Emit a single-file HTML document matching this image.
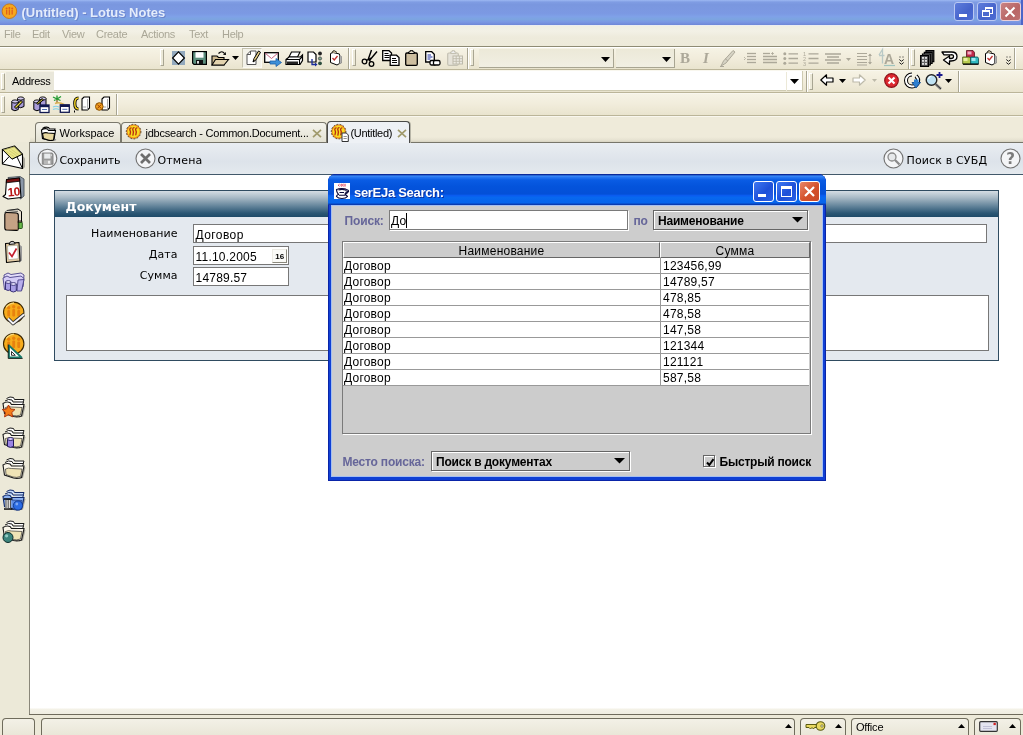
<!DOCTYPE html>
<html lang="ru">
<head>
<meta charset="utf-8">
<title>(Untitled) - Lotus Notes</title>
<style>
*{box-sizing:border-box;margin:0;padding:0}
html,body{width:1023px;height:735px;overflow:hidden;background:#ECE9D8}
body{position:relative;will-change:transform;font-family:"Liberation Sans","DejaVu Sans",sans-serif;font-size:11px;color:#000}
.abs{position:absolute}
.t{position:absolute;white-space:nowrap;line-height:1}
.tah{font-family:"Liberation Sans","DejaVu Sans Condensed",sans-serif;font-size:11px}
.ver{font-family:"DejaVu Sans","Liberation Sans",sans-serif;font-size:11px}
svg{position:absolute;overflow:visible}
/* ---------- XP title bar ---------- */
#title{left:0;top:0;width:1023px;height:25px;background:linear-gradient(#9DB8F2 0,#809DE3 8%,#7A97DF 18%,#7C99E3 55%,#7FA1E8 66%,#7CA5E0 77%,#7B97E4 88%,#6E87D7 100%)}
#title .cap{left:21.5px;top:5.500px;font-size:13px;font-weight:bold;color:#E4ECFB;text-shadow:1px 1px 0 #6C86CC}
.wb{position:absolute;top:2px;width:20px;height:19px;border:1px solid #B9C8F2;border-radius:3px;background:linear-gradient(135deg,#5E7DDC,#4563CB 60%,#4E6DD4)}
/* ---------- menu ---------- */
#menu{left:0;top:25px;width:1023px;height:21px;background:linear-gradient(#E9ECF6 0,#F1EFE3 1.500px,#F3F1E6 6px,#EEEBDC 12px,#EDEADA 21px)}
#menu .t{top:4px;color:#AAA797;font-size:11px;letter-spacing:-.3px}
/* ---------- toolbars ---------- */
.hline{position:absolute;left:0;width:1023px;height:1px}
.grip{position:absolute;width:4px;border-left:1px solid #fff;border-top:1px solid #fff;border-right:1px solid #A8A592;border-bottom:1px solid #A8A592;background:#ECE9D8}
.tbg{background:linear-gradient(#F6F3E5 0,#F1ECDB 50%,#E9E4CE 100%)}
/* ---------- tabs ---------- */
.tab{position:absolute;top:122px;height:20px;border:1px solid #7A786C;border-bottom:none;border-radius:4px 4px 0 0;background:linear-gradient(#F4F3EC,#E3E1D3)}
.tab .t{top:5px}
/* ---------- action bar ---------- */
#abar{left:29px;top:142px;width:994px;height:33px;background:linear-gradient(#E9EDF2,#DDE3EA 60%,#E4E9EE);border-top:1px solid #77756A;border-left:1px solid #8A877A;border-bottom:1px solid #42586A}
/* ---------- document ---------- */
#doc{left:30px;top:175px;width:993px;height:539px;background:linear-gradient(#fff 0,#fff 533px,#F4F2E8 534px,#EFEDE0 539px)}
#panel{left:54px;top:190px;width:945px;height:171px;border:1px solid #2F4B60;background:#E4E9EF}
#phead{left:0;top:0;width:943px;height:26px;background:linear-gradient(#D5DDE3 0,#A9BAC6 25%,#5F8198 60%,#2B5774 85%,#1E4A68 100%)}
.fld{position:absolute;background:#fff;border:1px solid #777}
.lbl{position:absolute;white-space:nowrap;line-height:1;font-family:"DejaVu Sans","Liberation Sans",sans-serif;font-size:11px;letter-spacing:.1px}
/* ---------- java dialog ---------- */
#dlg{left:328px;top:174px;width:498px;height:306.500px;border-radius:8px 8px 0 0;background:#1040D4;overflow:hidden;box-shadow:inset 0 0 0 1px #0A24A8}
#dlgt{left:0;top:0;width:498px;height:31px;background:linear-gradient(#0A2A9A 0,#0A2A9A 1px,#3C8CF8 1.800px,#2474F0 3.500px,#0A5CE4 6px,#0454DC 12px,#0450D8 20px,#0A5CF0 21.500px,#0868F0 23.500px,#0664EC 29px,#0A3CB0 30.200px,#0A3CB0 31px)}
#dlgc{left:4px;top:32px;width:490px;height:270px;background:#CDCDCD;box-shadow:0 0 0 1px #A4BFF2}
.jl{position:absolute;white-space:nowrap;line-height:1;font-size:12px;font-weight:bold;color:#666699}
.jb{position:absolute;white-space:nowrap;line-height:1;font-size:12px;font-weight:bold;color:#000}
.jp{position:absolute;white-space:nowrap;line-height:1;font-size:12px;color:#000;letter-spacing:.22px}
.combo{position:absolute;height:20px;background:#CCCCCC;border:1px solid #666;box-shadow:inset 1px 1px 0 #fff,1px 1px 0 #fff}
.row{position:absolute;left:0;width:466px;height:16px;background:#fff;border-bottom:1px solid #999}
.xb{position:absolute;top:7px;width:21px;height:21px;border:1px solid #fff;border-radius:3px}
/* ---------- status ---------- */
.sbox{position:absolute;height:18px;border:1px solid #6F6C5C;border-bottom:none;border-radius:4px 4px 0 0;background:linear-gradient(#F3F1E7,#E9E6D7)}
</style>
</head>
<body>

<!-- ======= TITLE BAR ======= -->
<div id="title" class="abs">
  <svg style="left:1px;top:3px" width="17" height="17" viewBox="0 0 17 17"><circle cx="8.400" cy="8.200" r="7.300" fill="#F6A81C" stroke="#C8781A" stroke-width="1"/><g fill="#E0601C"><circle cx="5.600" cy="5.600" r="1"/><circle cx="8.400" cy="5" r="1"/><circle cx="11.200" cy="5.600" r="1"/><rect x="5" y="7" width="1.300" height="4.500"/><rect x="7.700" y="6.400" width="1.400" height="5.500"/><rect x="10.500" y="7" width="1.300" height="4.500"/></g></svg>
  <span class="t cap">(Untitled) - Lotus Notes</span>
  <div class="abs" style="left:1021px;top:0;width:2px;height:25px;background:#4A66C8"></div>
  <div class="wb" style="left:954px"><div class="abs" style="left:4px;top:11px;width:8px;height:3px;background:#fff"></div></div>
  <div class="wb" style="left:977px"><div class="abs" style="left:7px;top:4px;width:8px;height:7px;border:1px solid #fff;border-top-width:2px"></div><div class="abs" style="left:4px;top:7px;width:8px;height:7px;border:1px solid #fff;border-top-width:2px;background:#4C69CE"></div></div>
  <div class="wb" style="left:1000px;width:21px;background:linear-gradient(135deg,#C98383,#B96666 60%,#BE7171);border-color:#E9CFD8"><svg style="left:3px;top:3px" width="12" height="12"><path d="M1.5 1.5 L10.5 10.5 M10.5 1.5 L1.5 10.5" stroke="#fff" stroke-width="2" fill="none"/></svg></div>
</div>

<!-- ======= MENU ======= -->
<div id="menu" class="abs">
  <span class="t" style="left:4px">File</span>
  <span class="t" style="left:32px">Edit</span>
  <span class="t" style="left:62px">View</span>
  <span class="t" style="left:96px">Create</span>
  <span class="t" style="left:141px">Actions</span>
  <span class="t" style="left:189px">Text</span>
  <span class="t" style="left:222px">Help</span>
</div>
<div class="hline" style="top:46px;background:#8E8B74"></div>
<div class="hline" style="top:47px;background:#fff"></div>

<!-- ======= TOOLBAR 1 ======= -->
<div id="tb1" class="abs tbg" style="left:0;top:48px;width:1023px;height:21px">
  <div class="grip" style="left:160px;top:1px;height:17px"></div>
  <svg style="left:172px;top:3px" width="13" height="14" viewBox="0 0 13 14"><rect width="13" height="14" fill="#93A9BD"/><path d="M6.500 .8L12.400 7 6.500 13.200 .6 7z" fill="#fff" stroke="#000" stroke-width="1.200"/></svg>
  <svg style="left:192px;top:3px" width="15" height="14" viewBox="0 0 15 14"><path d="M.6 .6h13.800v12.800H2L.6 12z" fill="#5C8F7D" stroke="#000" stroke-width="1.200"/><rect x="3.500" y="1.200" width="8" height="5.500" fill="#fff"/><rect x="4" y="9" width="7" height="4.400" fill="#111"/><rect x="5" y="10" width="2" height="2.600" fill="#ddd"/></svg>
  <svg style="left:211px;top:2px" width="18" height="16" viewBox="0 0 18 16"><path d="M1 6h5l1.500 1.500H13V15H1z" fill="#CDB98F" stroke="#000" stroke-width="1.100"/><path d="M1 15l3.500-5.500H17.500L13 15z" fill="#E3D3AE" stroke="#000" stroke-width="1.100"/><path d="M7.500 3.500q3.500-3.500 6 0" fill="none" stroke="#000" stroke-width="1.200"/><path d="M12 4.800l3 .2-.3-3z" fill="#000"/></svg>
  <svg style="left:232px;top:8px" width="7" height="4" viewBox="0 0 7 4"><path d="M0 0h7l-3.5 4z" fill="#000"/></svg>
  <div class="abs" style="left:242px;top:0;width:20px;height:20px;background:#F3F2E9;border:1px solid #C5C2AE;border-right-color:#FBFAF4;border-bottom-color:#FBFAF4"></div>
  <svg style="left:246px;top:2px" width="15" height="16" viewBox="0 0 15 16"><path d="M1 4.500L4.500 1H10v13.500H1z" fill="#fff" stroke="#555" stroke-width="1"/><path d="M1 4.500h3.500V1" fill="none" stroke="#555" stroke-width="1"/><path d="M7 12l1-3.500L12.500 1l2 1.300L10 9.800z" fill="#E9D28A" stroke="#000" stroke-width="1"/><path d="M7 12l.6-2 1.400 1z" fill="#000"/></svg>
  <svg style="left:264px;top:4px" width="18" height="14" viewBox="0 0 18 14"><rect x=".7" y=".7" width="13.600" height="9.600" fill="#fff" stroke="#000" stroke-width="1.300"/><path d="M1 1l6.500 5.500L14 1" fill="none" stroke="#C05070" stroke-width=".9"/><path d="M6 9h6V6.500l5.500 4-5.500 4V12H6z" fill="#3C8FD8" stroke="#1D5FA8" stroke-width=".8"/></svg>
  <svg style="left:285px;top:3px" width="18" height="15" viewBox="0 0 18 15"><path d="M4 6L6.500 1H15l-2.500 5z" fill="#fff" stroke="#000" stroke-width="1.100"/><path d="M1 8.500L4 6h11.500l2-2v5.500L15 13.500H1z" fill="#fff" stroke="#000" stroke-width="1.200"/><path d="M1 8.500h13.500V13.500M14.500 8.500l3-3" fill="none" stroke="#000" stroke-width="1.100"/><rect x="2" y="10.500" width="11" height="2.500" fill="#222"/></svg>
  <svg style="left:307px;top:3px" width="16" height="15" viewBox="0 0 16 15"><path d="M1 1h5.500L9 3.500V11H1z" fill="#fff" stroke="#000" stroke-width="1.200"/><path d="M5 8v5.500h3.500" fill="none" stroke="#1A2C9C" stroke-width="1.300"/><path d="M8 11.500l2.500 2-2.500 2z" fill="#1A2C9C"/><circle cx="13" cy="2.500" r="1.900" fill="#222"/><circle cx="13" cy="7.500" r="1.600" fill="#7FA890" stroke="#333" stroke-width=".7"/><circle cx="13" cy="12.300" r="1.900" fill="#2E4E3E"/></svg>
  <svg style="left:329px;top:2px" width="14" height="16" viewBox="0 0 14 16"><path d="M1.500 3.500L4 2.500l6.500 1.500v9.500L8 15 1.500 12.500z" fill="#fff" stroke="#000" stroke-width="1"/><path d="M3 2.800q1-2.800 2.500-2t2.500 1.700" fill="#E8D8B0" stroke="#000" stroke-width=".9"/><path d="M3.500 8l1.800 2L8.500 6" fill="none" stroke="#C03030" stroke-width="1.300"/><path d="M10.500 5l2 1.500v6.500l-2 1" fill="#B0B0B0" stroke="#777" stroke-width=".6"/></svg>
  <div class="abs" style="left:348px;top:0px;width:1px;height:21px;background:#A8A592"></div><div class="abs" style="left:349px;top:0px;width:1px;height:21px;background:#fff"></div>
  <div class="grip" style="left:352px;top:1px;height:17px"></div>
  <svg style="left:361px;top:2px" width="18" height="17" viewBox="0 0 18 17"><path d="M10.500 0L7 10M16 1.500L8 11" fill="none" stroke="#000" stroke-width="1.400"/><circle cx="3.500" cy="11.500" r="2.300" fill="none" stroke="#000" stroke-width="1.300"/><circle cx="10.500" cy="14" r="2.300" fill="none" stroke="#000" stroke-width="1.300"/><path d="M5.500 10.500L10 8M9.500 11.800L8 9" stroke="#000" stroke-width="1.200"/></svg>
  <svg style="left:382px;top:2px" width="18" height="16" viewBox="0 0 18 16"><path d="M.7 .7h6.300L9.500 3v7.500H.7z" fill="#fff" stroke="#000" stroke-width="1.300"/><path d="M2.500 3.500h4M2.500 5.500h5M2.500 7.500h5" stroke="#000" stroke-width="1"/><path d="M8.200 5.200h6.300L17 7.500V15.300H8.200z" fill="#fff" stroke="#000" stroke-width="1.300"/><path d="M10 8.500h4M10 10.500h5M10 12.500h5" stroke="#000" stroke-width="1"/></svg>
  <svg style="left:405px;top:2px" width="13" height="16" viewBox="0 0 13 16"><rect x=".7" y="3" width="11.600" height="12.300" rx="1.200" fill="#CDBE9F" stroke="#000" stroke-width="1.300"/><path d="M3.500 3.500V2h1.500V.7h3V2h1.500v1.500z" fill="#E9E1CC" stroke="#000" stroke-width="1"/></svg>
  <svg style="left:425px;top:3px" width="16" height="16" viewBox="0 0 16 16"><path d="M.7 .7h6L9.300 3.300V11H.7z" fill="#fff" stroke="#000" stroke-width="1.300"/><path d="M2.500 4h3.500M2.500 6h5M2.500 8h3" stroke="#1A2C9C" stroke-width="1"/><rect x="5" y="9.500" width="6" height="4.500" rx="1.500" fill="#fff" stroke="#000" stroke-width="1.300"/><rect x="8.500" y="9.500" width="6.500" height="4.500" rx="1.500" fill="#fff" stroke="#000" stroke-width="1.300"/></svg>
  <svg style="left:447px;top:2px" width="16" height="16" viewBox="0 0 16 16"><rect x=".7" y="3" width="10.600" height="12.300" rx="1.200" fill="#E6E3D9" stroke="#C4C1B2" stroke-width="1.200"/><path d="M3.500 3.500V2h1.500V.7h2.500V2H9v1.500z" fill="#EEE" stroke="#C4C1B2" stroke-width="1"/><rect x="6" y="6" width="9.500" height="8" fill="#EDEBE3" stroke="#BDBAAA" stroke-width="1"/><path d="M6 8.700h9.500M6 11.300h9.500M9.200 6v8M12.400 6v8" stroke="#BDBAAA" stroke-width=".9"/></svg>
  <div class="abs" style="left:467px;top:0px;width:1px;height:21px;background:#A8A592"></div><div class="abs" style="left:468px;top:0px;width:1px;height:21px;background:#fff"></div>
  <div class="grip" style="left:470px;top:1px;height:17px"></div>
  <div class="abs" style="left:479px;top:1px;width:135px;height:19px;border-bottom:1px solid #A8A592;border-right:1px solid #A8A592;background:linear-gradient(#ECE9D8,#F1EFE3)"></div>
  <svg style="left:601px;top:9px" width="9" height="5" viewBox="0 0 9 5"><path d="M0 0h9l-4.5 5z" fill="#000"/></svg>
  <div class="abs" style="left:616px;top:1px;width:59px;height:19px;border-bottom:1px solid #A8A592;border-right:1px solid #A8A592;background:linear-gradient(#ECE9D8,#F1EFE3)"></div>
  <svg style="left:662px;top:9px" width="9" height="5" viewBox="0 0 9 5"><path d="M0 0h9l-4.5 5z" fill="#000"/></svg>
  <span class="t" style="left:680px;top:3px;font-family:'Liberation Serif',serif;font-weight:bold;font-size:15px;color:#ACA899">B</span>
  <span class="t" style="left:703px;top:3px;font-family:'Liberation Serif',serif;font-style:italic;font-weight:bold;font-size:15px;color:#ACA899">I</span>
  <svg style="left:720px;top:1px" width="16" height="18" viewBox="0 0 16 18"><path d="M1 17l2.500-5L13 1.500l2 1.500L6 14z" fill="#D6D3C4" stroke="#ACA899" stroke-width="1"/><path d="M5 9.500l3 2.500" stroke="#ACA899" stroke-width="1"/><path d="M0 17.500h4" stroke="#ACA899" stroke-width="1"/></svg>
  <svg style="left:744px;top:4px" width="13" height="14" viewBox="0 0 13 14"><path d="M0 5l1.500 1.500L0 8" fill="none" stroke="#ACA899" stroke-width=".8"/><g transform="translate(3,0)"><path d="M0 1.5h9" stroke="#ACA899" stroke-width="1.300"/><path d="M0 4.5h9" stroke="#ACA899" stroke-width="1.300"/><path d="M0 7.5h9" stroke="#ACA899" stroke-width="1.300"/><path d="M0 10.5h9" stroke="#ACA899" stroke-width="1.300"/></g></svg>
  <svg style="left:763px;top:4px" width="15" height="14" viewBox="0 0 15 14"><path d="M0 1.500h7" stroke="#ACA899" stroke-width="1.300"/><path d="M9.500 0v3M8 1.500h3" stroke="#ACA899" stroke-width=".8"/><path d="M0 4.500h14M0 7.500h14M0 10.500h14" stroke="#ACA899" stroke-width="1.300"/></svg>
  <svg style="left:783px;top:4px" width="16" height="14" viewBox="0 0 16 14"><g fill="#ACA899"><circle cx="1.800" cy="1.800" r="1.500"/><circle cx="1.800" cy="6.500" r="1.500"/><circle cx="1.800" cy="11.200" r="1.500"/></g><path d="M5.500 1.800H15M5.500 6.500H15M5.500 11.200H15" stroke="#ACA899" stroke-width="1.300"/></svg>
  <svg style="left:803px;top:3px" width="16" height="16" viewBox="0 0 16 16"><text x="0" y="4.500" font-size="5.500" font-family="Liberation Sans,sans-serif" fill="#ACA899">1</text><text x="0" y="9.500" font-size="5.500" font-family="Liberation Sans,sans-serif" fill="#ACA899">2</text><text x="0" y="14.500" font-size="5.500" font-family="Liberation Sans,sans-serif" fill="#ACA899">3</text><path d="M5.500 2.800H15.500M5.500 7.500H15.500M5.500 12.200H15.500" stroke="#ACA899" stroke-width="1.300"/></svg>
  <svg style="left:825px;top:5px" width="16" height="12" viewBox="0 0 16 12"><path d="M0 1h16M2 4h12M0 7h16M2 10h12" stroke="#ACA899" stroke-width="1.300"/></svg>
  <svg style="left:846px;top:10px" width="5" height="3" viewBox="0 0 5 3"><path d="M0 0h5l-2.5 3z" fill="#ACA899"/></svg>
  <svg style="left:857px;top:3px" width="16" height="16" viewBox="0 0 16 16"><path d="M0 2.500h10M0 5.500h10M0 8.500h10M0 11.500h10M0 14h10" stroke="#ACA899" stroke-width="1.100"/><path d="M13 3v10" stroke="#ACA899" stroke-width="1"/><path d="M11 5l2-2.500L15 5zM11 11l2 2.500L15 11z" fill="#ACA899"/></svg>
  <svg style="left:877px;top:1px" width="19" height="18" viewBox="0 0 19 18"><path d="M2 6l3.500-5.500v8M2 6.500h5.500M5.500 8.500v6" fill="none" stroke="#B9C9C6" stroke-width="1.300"/><text x="7" y="15" font-size="14" font-weight="bold" font-family="Liberation Sans,sans-serif" fill="#ACA899">A</text><path d="M7 16.500h11" stroke="#9FC4BE" stroke-width="1.200"/></svg>
  <svg style="left:899px;top:8px" width="5" height="10" viewBox="0 0 5 10"><path d="M.5 1h1M3.500 1h1" stroke="#222" stroke-width="1"/><path d="M.3 3.500L2.500 5.300 4.700 3.500M.3 6.500L2.500 8.300 4.700 6.500" fill="none" stroke="#222" stroke-width="1"/></svg>
  <div class="abs" style="left:908px;top:0px;width:1px;height:21px;background:#A8A592"></div><div class="abs" style="left:909px;top:0px;width:1px;height:21px;background:#fff"></div>
  <div class="grip" style="left:911px;top:1px;height:17px"></div>
  <svg style="left:920px;top:2px" width="15" height="17" viewBox="0 0 15 17"><path d="M6 .7h7.800v11H6z" fill="#555" stroke="#000" stroke-width="1.200"/><path d="M4.300 2.300h7.800v11H4.300z" fill="#777" stroke="#000" stroke-width="1.200"/><path d="M2.500 4h7.800v11H2.500z" fill="#888" stroke="#000" stroke-width="1.200"/><path d="M.7 5.600h7.800v10.700H.7z" fill="#666" stroke="#000" stroke-width="1.300"/><g fill="#ddd"><rect x="2" y="7" width="2" height="1.800"/><rect x="5" y="7" width="2" height="1.800"/><rect x="2" y="10" width="2" height="1.800"/><rect x="5" y="10" width="2" height="1.800"/><rect x="2" y="13" width="2" height="1.800"/><rect x="5" y="13" width="2" height="1.800"/></g></svg>
  <svg style="left:941px;top:3px" width="17" height="15" viewBox="0 0 17 15"><path d="M1 1h9.500q5.500 0 5.500 4.500T10 10H8.500v3.500L2.500 9l6-4v2.500H10q2.500 0 2.500-2T10 3.800H3z" fill="#fff" stroke="#000" stroke-width="1.300" stroke-linejoin="round"/></svg>
  <svg style="left:962px;top:1px" width="17" height="16" viewBox="0 0 17 16"><path d="M4.500 1.500h6.500l1.500 2v5.500H4.500z" fill="#C0284A" stroke="#5A1020" stroke-width=".8"/><path d="M5.500 2.500h4v3h-4z" fill="#F0A8C0"/><path d="M.7 8h7l1 1.500V15H.7z" fill="#B8CC50" stroke="#3A4A10" stroke-width=".8"/><path d="M1.500 9h4v3h-4z" fill="#E8F0A0"/><path d="M8.700 8h7l.8 1.500V15H8.700z" fill="#30B8C0" stroke="#0A4A50" stroke-width=".8"/><path d="M9.500 9h4v3h-4z" fill="#A0E8F0"/><path d="M1 15.200h15.500" stroke="#000" stroke-width="1.200"/></svg>
  <svg style="left:984px;top:2px" width="15" height="16" viewBox="0 0 15 16"><path d="M1.500 3.500L4 2.500l6.500 1.500v9.500L8 15 1.500 12.500z" fill="#fff" stroke="#000" stroke-width="1"/><path d="M3 2.800q1-2.800 2.500-2t2.500 1.700" fill="#E8D8B0" stroke="#000" stroke-width=".9"/><path d="M3.500 8l1.800 2L8.500 6" fill="none" stroke="#C03030" stroke-width="1.300"/><path d="M10.500 5l2 1.500v6.500l-2 1" fill="#B0B0B0" stroke="#777" stroke-width=".6"/></svg>
  <svg style="left:1006px;top:8px" width="5" height="10" viewBox="0 0 5 10"><path d="M.5 1h1M3.500 1h1" stroke="#222" stroke-width="1"/><path d="M.3 3.500L2.500 5.300 4.700 3.500M.3 6.500L2.500 8.300 4.700 6.500" fill="none" stroke="#222" stroke-width="1"/></svg>
  <div class="abs" style="left:1014px;top:0px;width:1px;height:21px;background:#A8A592"></div><div class="abs" style="left:1015px;top:0px;width:1px;height:21px;background:#fff"></div>
</div>
<div class="hline" style="top:69px;background:#BBB599"></div>
<div class="hline" style="top:70px;background:#F9F7EE"></div>

<!-- ======= ADDRESS ROW ======= -->
<div id="addr" class="abs tbg" style="left:0;top:71px;width:1023px;height:21px">
  <div class="grip" style="left:1px;top:2px;height:17px"></div>
  <div class="abs" style="left:6px;top:1px;width:48px;height:20px;background:#E9E7DA"></div>
  <span class="t tah" style="left:12px;top:5px;letter-spacing:-.25px">Address</span>
  <div class="abs" style="left:54px;top:0;width:749px;height:20px;background:#fff;border-bottom:1px solid #CFCBB2;border-right:1px solid #CFCBB2"></div>
  <svg style="left:790px;top:8px" width="9" height="5" viewBox="0 0 9 5"><path d="M0 0h9l-4.5 5z" fill="#000"/></svg>
  <div class="abs" style="left:786px;top:1px;width:1px;height:19px;background:#ECE9D8"></div>
  <div class="abs" style="left:806px;top:0px;width:1px;height:21px;background:#A8A592"></div><div class="abs" style="left:807px;top:0px;width:1px;height:21px;background:#fff"></div>
  <div class="grip" style="left:809px;top:2px;height:17px"></div>
  <svg style="left:820px;top:3px" width="14" height="12" viewBox="0 0 14 12"><path d="M.8 6L6.500 .8V4H13v4H6.500v3.200z" fill="#fff" stroke="#000" stroke-width="1.200" stroke-linejoin="round"/></svg>
  <svg style="left:839px;top:8px" width="7" height="4" viewBox="0 0 7 4"><path d="M0 0h7l-3.5 4z" fill="#000"/></svg>
  <svg style="left:852px;top:3px" width="14" height="12" viewBox="0 0 14 12"><path d="M13.200 6L7.500 .8V4H1v4h6.500v3.200z" fill="#fff" stroke="#BDBAAA" stroke-width="1.200" stroke-linejoin="round"/></svg>
  <svg style="left:872px;top:8px" width="5" height="3" viewBox="0 0 5 3"><path d="M0 0h5l-2.5 3z" fill="#BDBAAA"/></svg>
  <svg style="left:884px;top:2px" width="15" height="15" viewBox="0 0 15 15"><circle cx="7.500" cy="7.500" r="6.800" fill="#DC2830" stroke="#8C1018" stroke-width="1.200"/><path d="M4.500 4.500l6 6M10.500 4.500l-6 6" stroke="#fff" stroke-width="2.200"/></svg>
  <svg style="left:903px;top:2px" width="18" height="16" viewBox="0 0 18 16"><path d="M9 1.500A6 6 0 1 0 9 13.500A6 6 0 0 0 13 3" fill="none" stroke="#000" stroke-width="4"/><path d="M9 1.500A6 6 0 1 0 9 13.500A6 6 0 0 0 13 3" fill="none" stroke="#fff" stroke-width="2"/><path d="M9 9.500h8.500L13 15z" fill="#2D7FD0" stroke="#144A8A" stroke-width=".9"/><path d="M11 6.500h4.500v3.500H11z" fill="#2D7FD0"/></svg>
  <svg style="left:925px;top:1px" width="18" height="17" viewBox="0 0 18 17"><circle cx="6.500" cy="8" r="5.300" fill="#BFE2F4" stroke="#222" stroke-width="1.400"/><path d="M3.500 7q.5-2.500 3-3" fill="none" stroke="#fff" stroke-width="1.200"/><path d="M10.500 12L16 17" stroke="#888" stroke-width="2.600"/><path d="M10.500 12L16 17" stroke="#333" stroke-width="1"/><path d="M14.500 0v6M11.500 3h6" stroke="#1A1A8C" stroke-width="1.800"/></svg>
  <svg style="left:945px;top:8px" width="7" height="4" viewBox="0 0 7 4"><path d="M0 0h7l-3.5 4z" fill="#000"/></svg>
  <div class="abs" style="left:958px;top:0px;width:1px;height:21px;background:#A8A592"></div><div class="abs" style="left:959px;top:0px;width:1px;height:21px;background:#fff"></div>
</div>
<div class="hline" style="top:92px;background:#BBB599"></div>
<div class="hline" style="top:93px;background:#F9F7EE"></div>

<!-- ======= TOOLBAR 3 ======= -->
<div id="tb3" class="abs tbg" style="left:0;top:94px;width:1023px;height:21px">
  <div class="grip" style="left:1px;top:2px;height:17px"></div>
  <svg style="left:11px;top:2px" width="16" height="17" viewBox="0 0 16 17"><path d="M6.5 2.5v8q3 2.500 6.500 0v-8" fill="#A99CD8" stroke="#000" stroke-width="1"/><ellipse cx="9.75" cy="2.5" rx="3.250" ry="1.600" fill="#D4CCF0" stroke="#000" stroke-width=".9"/><path d="M0.8 5.5v8q3 2.500 6.500 0v-8" fill="#A99CD8" stroke="#000" stroke-width="1"/><ellipse cx="4.05" cy="5.5" rx="3.250" ry="1.600" fill="#D4CCF0" stroke="#000" stroke-width=".9"/><path d="M4 12l7-7" stroke="#000" stroke-width="3"/><path d="M4.500 11.500l6-6" stroke="#E8D84A" stroke-width="1.200"/></svg>
  <svg style="left:33px;top:2px" width="17" height="17" viewBox="0 0 17 17"><path d="M6.5 2.5v8q3 2.500 6.500 0v-8" fill="#A99CD8" stroke="#000" stroke-width="1"/><ellipse cx="9.75" cy="2.5" rx="3.250" ry="1.600" fill="#D4CCF0" stroke="#000" stroke-width=".9"/><path d="M0.8 5.5v8q3 2.500 6.500 0v-8" fill="#A99CD8" stroke="#000" stroke-width="1"/><ellipse cx="4.05" cy="5.5" rx="3.250" ry="1.600" fill="#D4CCF0" stroke="#000" stroke-width=".9"/><path d="M4 8l6-5" stroke="#000" stroke-width="2.600"/><path d="M4.500 7.500l5-4" stroke="#E8D84A" stroke-width="1"/><rect x="7" y="9" width="9" height="7.500" fill="#fff" stroke="#101850" stroke-width="1.300"/><rect x="7" y="9" width="9" height="2.200" fill="#101850"/><path d="M9 13.5h5" stroke="#5070B0" stroke-width="1"/></svg>
  <svg style="left:52px;top:1px" width="18" height="18" viewBox="0 0 18 18"><path d="M5 8V4" stroke="#7A5A20" stroke-width="1.200"/><path d="M5 4L1 2M5 4L2 5.500M5 4l4-2.500M5 4l3.500 1.500M5 4V.5" stroke="#1E9A30" stroke-width="1.300"/><path d="M3 8.500q4-2 9 1" fill="none" stroke="#D8B050" stroke-width="1.600"/><path d="M1 12q3-1.500 6 0M1 14.500q3-1.500 6 0" fill="none" stroke="#80D0E8" stroke-width="1.200"/><rect x="8.3" y="9.8" width="9" height="7.500" fill="#fff" stroke="#101850" stroke-width="1.300"/><rect x="8.3" y="9.8" width="9" height="2.200" fill="#101850"/><path d="M10.3 14.3h5" stroke="#5070B0" stroke-width="1"/></svg>
  <svg style="left:74px;top:2px" width="17" height="17" viewBox="0 0 17 17"><path d="M4.500 2Q.8 2 .8 7.500T4.500 13" fill="none" stroke="#000" stroke-width="3.200"/><path d="M4.500 2Q.8 2 .8 7.500T4.500 13" fill="none" stroke="#F0D020" stroke-width="1.500"/><path d="M.5 14.500v2" stroke="#000" stroke-width="1"/><path d="M8 3.0l2-2h5.500v11l-2 2H8z" fill="#fff" stroke="#000" stroke-width="1.100"/><path d="M13.5 3.0v11" stroke="#999" stroke-width=".8"/><path d="M9.2 11.0h3" stroke="#888" stroke-width=".8"/></svg>
  <svg style="left:95px;top:2px" width="16" height="17" viewBox="0 0 16 17"><path d="M7 3.0l2-2h5.500v11l-2 2H7z" fill="#fff" stroke="#000" stroke-width="1.100"/><path d="M12.5 3.0v11" stroke="#999" stroke-width=".8"/><path d="M8.2 11.0h3" stroke="#888" stroke-width=".8"/><circle cx="4.300" cy="10.500" r="3.800" fill="#F0A020" stroke="#8A5000" stroke-width="1"/><path d="M2.300 8.500l4 4M6.300 8.500l-4 4" stroke="#A04000" stroke-width="1"/></svg>
  <div class="abs" style="left:116px;top:0px;width:1px;height:21px;background:#A8A592"></div><div class="abs" style="left:117px;top:0px;width:1px;height:21px;background:#fff"></div>
</div>
<div class="hline" style="top:115px;background:#BBB599"></div>
<div class="hline" style="top:116px;background:#F9F7EE"></div>

<!-- ======= TABS ======= -->
<div class="abs" style="left:0;top:117px;width:1023px;height:25px;background:#EFEBDA"></div><div class="abs" style="left:30px;top:137px;width:993px;height:5px;background:linear-gradient(#EFEBDA,#E6E2D1 60%,#D6D2C1)"></div>
<div id="tabs" class="abs" style="left:0;top:117px;width:1023px;height:26px;z-index:2">
  <div class="tab" style="left:35px;top:5px;width:86px"><svg style="left:4px;top:2px" width="18" height="17" viewBox="0 0 18 17"><path d="M2.500 3.500q3-2 6-1l1 1.500h5.500l-.5 2" fill="#fff" stroke="#000" stroke-width="1.100"/><path d="M1.500 5q3-2 6-1l1 1.500H15.500l-1.500 9q-3 1.500-6 0.500l-5.500-1.500z" fill="#fff" stroke="#000" stroke-width="1.100"/><path d="M2.500 8.500q3-1.500 5.500-.5l6.500.5-1 6.500q-3 1-5.500 0L3.500 13.500z" fill="#E8D8A0" stroke="#000" stroke-width="1.100"/><path d="M14 15.500l2-1" stroke="#888" stroke-width="1.200"/></svg><span class="t tah" style="left:23.500px;top:4.500px">Workspace</span></div>
  <div class="tab" style="left:121px;top:5px;width:206px"><svg style="left:3px;top:0px" width="18" height="18" viewBox="0 0 18 18"><circle cx="8.6" cy="8.6" r="6.600" fill="#F8DC20" stroke="#F08818" stroke-width="1.200"/><circle cx="8.6" cy="8.6" r="7.300" fill="none" stroke="#2A2000" stroke-width=".8" stroke-dasharray="1.800 1.400"/><g fill="none" stroke="#B82C10" stroke-width="1.300" stroke-linecap="round"><path d="M5.0 11.8q1.200-3-.2-5.200 0-1.600 1.300-1.800"/><path d="M7.8999999999999995 12.2q1.200-3.400-.2-5.800 0-1.600 1.300-1.800"/><path d="M10.8 11.8q1.200-3-.2-5.200 0-1.600 1.300-1.800"/></g></svg><span class="t tah" style="left:23.500px;top:4.500px;letter-spacing:-.22px">jdbcsearch - Common.Document...</span><svg style="left:190px;top:6px" width="10" height="9" viewBox="0 0 10 9"><path d="M1 .8l8 7.400M9 .8L1 8.200" stroke="#A09A6C" stroke-width="1.700" fill="none"/></svg></div>
  <div class="tab" style="left:327px;top:4px;width:83px;height:22px;background:#EEF1F5;border-color:#4A4A48;box-shadow:1px 0 0 #B8B6A8"><svg style="left:2px;top:1px" width="22" height="20" viewBox="0 0 22 20"><circle cx="8.6" cy="8.6" r="6.600" fill="#F8DC20" stroke="#F08818" stroke-width="1.200"/><circle cx="8.6" cy="8.6" r="7.300" fill="none" stroke="#2A2000" stroke-width=".8" stroke-dasharray="1.800 1.400"/><g fill="none" stroke="#B82C10" stroke-width="1.300" stroke-linecap="round"><path d="M5.0 11.8q1.200-3-.2-5.200 0-1.600 1.300-1.800"/><path d="M7.8999999999999995 12.2q1.200-3.400-.2-5.800 0-1.600 1.300-1.800"/><path d="M10.8 11.8q1.200-3-.2-5.200 0-1.600 1.300-1.800"/></g><path d="M12 10h4.300l2 2v6.500H12z" fill="#fff" stroke="#333" stroke-width="1"/><path d="M13.500 13.500h3.300M13.500 15.500h3.300" stroke="#777" stroke-width=".8"/></svg><span class="t tah" style="left:22.500px;top:6px;letter-spacing:-.3px">(Untitled)</span><svg style="left:69px;top:7px" width="10" height="9" viewBox="0 0 10 9"><path d="M1 .8l8 7.400M9 .8L1 8.200" stroke="#A09A6C" stroke-width="1.700" fill="none"/></svg></div>
</div>

<!-- ======= SIDEBAR ======= -->
<div id="side" class="abs" style="left:0;top:143px;width:29px;height:570px">
  <svg style="left:0;top:0" width="29" height="570" viewBox="0 143 29 570">
  <path d="M23 156l2 2.500v8.500l-2 2z" fill="#A8A59A"/><path d="M2.400 149.500L14.500 146l8 8.200V168.500L2.400 164z" fill="#fff" stroke="#000" stroke-width="1.100" stroke-linejoin="round"/><path d="M3.300 150L14.300 146.800l7.500 7.600L12 159z" fill="#E9E58A" stroke="#8C8A3A" stroke-width=".7"/><path d="M2.400 149.500L12 159.200l10.500-5M2.400 164l6.800-7.500M22.500 168.500l-5.500-11.600" fill="none" stroke="#000" stroke-width="1"/><path d="M6 151.500l8 5M9 150.500l7.500 5M11.500 149.500l7 5.200" stroke="#C9C560" stroke-width=".6"/>
  <path d="M8 177.500l12-1 4 2.500v17l-3.500 3z" fill="#8C98A8" stroke="#4A5058" stroke-width=".9"/><path d="M6.500 179.500L19.500 178l1.500 19.500-13 1.500-5 -2.500 2.500-2z" fill="#fff" stroke="#000" stroke-width="1.100" stroke-linejoin="round"/><path d="M6.500 179.500L19.500 178l.3 3.200L6.300 182.800z" fill="#7A1010" stroke="#000" stroke-width=".8"/><text x="7.500" y="196" font-size="12" font-weight="bold" font-family="Liberation Sans,sans-serif" fill="#B81414" transform="rotate(-5 13 190)" letter-spacing="-.8">10</text>
  <path d="M7 210.500l11-1.500 3.500 2.500v14l-3 3" fill="#E8E0D0" stroke="#000" stroke-width="1"/><path d="M5 213q0-2 2-2.300l11-1.200M8 212.500l10-1.200" fill="none" stroke="#555" stroke-width=".8"/><rect x="4.800" y="212.800" width="13.500" height="17.500" rx="2" fill="#C4A285" stroke="#000" stroke-width="1.100" stroke-linejoin="round" transform="skewY(3) translate(0,-.6)"/><path d="M18.300 221h3.500v2h-3.500z" fill="#C4A285" stroke="#000" stroke-width=".9"/><rect x="18.800" y="222.500" width="3.500" height="6" rx=".8" fill="#6CB84C" stroke="#1A4A10" stroke-width=".9"/><path d="M6.500 229.500h11" stroke="#8A6A50" stroke-width="1"/>
  <path d="M20 245l2 1.500v14l-3 2.500z" fill="#9A9A9A"/><path d="M5.500 243.500l13.500-1 1 18.500-13.500 1.500z" fill="#E4CDA6" stroke="#000" stroke-width="1.100" stroke-linejoin="round"/><path d="M7.500 246l10-.8.800 13.500-10 1z" fill="#fff" stroke="#998" stroke-width=".6"/><path d="M9 244.500q.5-3 3-3.200t3.200 2.600z" fill="#D0D0D0" stroke="#000" stroke-width=".9"/><path d="M9 252.500l3 4 4.500-8" fill="none" stroke="#C42030" stroke-width="1.700"/>
  <path d="M4 275l4-2 3 1.500 10-1.500 3 2-1 12H5z" fill="#E4DEFA" stroke="#4A4288" stroke-width=".9" stroke-linejoin="round"/><path d="M3 278l4-2 3 1.500 11-1.500 3 2.500-2 11H4.500z" fill="#D4CCF6" stroke="#4A4288" stroke-width=".9" stroke-linejoin="round"/><path d="M18 280l6 -.5-2.500 11.500H17z" fill="#B8AEEC" stroke="#4A4288" stroke-width=".9" stroke-linejoin="round"/><path d="M5.500 282v7.500q2.500 2 5.500 0V282" fill="#A89EE6" stroke="#2A2268" stroke-width=".9"/><ellipse cx="8.250" cy="282" rx="2.750" ry="1.400" fill="#E8E4FC" stroke="#2A2268" stroke-width=".8"/><path d="M10.500 284v7q2.800 2 5.800 0v-7" fill="#A89EE6" stroke="#2A2268" stroke-width=".9"/><ellipse cx="13.400" cy="284" rx="2.900" ry="1.400" fill="#E8E4FC" stroke="#2A2268" stroke-width=".8"/>
  <circle cx="13.700" cy="312.3" r="10.200" fill="#F6AC1C" stroke="#3A2600" stroke-width="1.100"/><g fill="#E8820E"><circle cx="8.700" cy="307.8" r="1.700"/><circle cx="13.700" cy="306.8" r="1.700"/><circle cx="18.700" cy="307.8" r="1.700"/><rect x="7.300" y="310.0" width="2.800" height="6.500" rx="1"/><rect x="12.300" y="309.0" width="2.800" height="7.500" rx="1"/><rect x="17.300" y="310.0" width="2.800" height="6.500" rx="1"/></g><path d="M6 307.3q3-4 8-4.500" fill="none" stroke="#FBD878" stroke-width="1.200"/><path d="M8 318.500l5 5L24 314.500" fill="none" stroke="#333" stroke-width="3.600" stroke-linejoin="round"/><path d="M8 318.500l5 5L24 314.500" fill="none" stroke="#F4F4F8" stroke-width="1.800" stroke-linejoin="round"/>
  <circle cx="13.700" cy="343.7" r="10.200" fill="#F6AC1C" stroke="#3A2600" stroke-width="1.100"/><g fill="#E8820E"><circle cx="8.700" cy="339.2" r="1.700"/><circle cx="13.700" cy="338.2" r="1.700"/><circle cx="18.700" cy="339.2" r="1.700"/><rect x="7.300" y="341.4" width="2.800" height="6.500" rx="1"/><rect x="12.300" y="340.4" width="2.800" height="7.500" rx="1"/><rect x="17.300" y="341.4" width="2.800" height="6.500" rx="1"/></g><path d="M6 338.7q3-4 8-4.500" fill="none" stroke="#FBD878" stroke-width="1.200"/><path d="M9 345.500L21.500 357.500H9z" fill="#fff" stroke="#1A7868" stroke-width="1.800" stroke-linejoin="round"/><path d="M11.500 351.500l3.800 3.800h-3.800z" fill="#fff" stroke="#000" stroke-width=".8"/><path d="M8.200 344.500v14h14.500" fill="none" stroke="#000" stroke-width=".7"/>
  <g transform="translate(2,395)"><path d="M20 9.500l3.500 1.500L21 21.500l-4 1z" fill="#A8A59A"/><path d="M4.500 3.500q3.500-2.500 7-1l1 2H22l-1 3" fill="#fff" stroke="#1A1A1A" stroke-width="1"/><path d="M3 6q3.500-2.500 7-1l1 2H21.500l-1 3" fill="#fff" stroke="#1A1A1A" stroke-width="1"/><path d="M1 8.500q3.500-2.500 7-1l1.500 2H22L19.500 21q-4 1.500-8 .5L2.500 18.500z" fill="#FBF7EA" stroke="#1A1A1A" stroke-width="1.100"/><path d="M3.500 12.500q3-1.500 6-.5l10.500.5-1.500 7.500q-4 1.500-7.500.5L4 18z" fill="#EFE3B6" stroke="#1A1A1A" stroke-width=".6"/><path d="M6.500 10l2.200 4 4.300.5-3.200 3 .9 4.400-4.200-2.200-4 2.200.9-4.400-3.200-3 4.300-.5z" fill="#F47C18" stroke="#A82C08" stroke-width=".9"/></g>
  <g transform="translate(2,426)"><path d="M20 9.500l3.500 1.500L21 21.500l-4 1z" fill="#A8A59A"/><path d="M4.500 3.500q3.500-2.500 7-1l1 2H22l-1 3" fill="#fff" stroke="#1A1A1A" stroke-width="1"/><path d="M3 6q3.500-2.500 7-1l1 2H21.500l-1 3" fill="#fff" stroke="#1A1A1A" stroke-width="1"/><path d="M1 8.500q3.500-2.500 7-1l1.500 2H22L19.500 21q-4 1.500-8 .5L2.500 18.500z" fill="#FBF7EA" stroke="#1A1A1A" stroke-width="1.100"/><path d="M3.500 12.500q3-1.500 6-.5l10.500.5-1.500 7.500q-4 1.500-7.500.5L4 18z" fill="#EFE3B6" stroke="#1A1A1A" stroke-width=".6"/><path d="M5.500 13v7.500q3 1.800 6 0V13" fill="#9C84E4" stroke="#201858" stroke-width="1"/><ellipse cx="8.500" cy="13" rx="3" ry="1.500" fill="#D4C8FA" stroke="#201858" stroke-width=".9"/></g>
  <g transform="translate(2,456.5)"><path d="M20 9.500l3.500 1.500L21 21.500l-4 1z" fill="#A8A59A"/><path d="M4.500 3.500q3.500-2.500 7-1l1 2H22l-1 3" fill="#fff" stroke="#1A1A1A" stroke-width="1"/><path d="M3 6q3.500-2.500 7-1l1 2H21.500l-1 3" fill="#fff" stroke="#1A1A1A" stroke-width="1"/><path d="M1 8.500q3.500-2.500 7-1l1.500 2H22L19.500 21q-4 1.500-8 .5L2.500 18.500z" fill="#FBF7EA" stroke="#1A1A1A" stroke-width="1.100"/><path d="M3.500 12.500q3-1.500 6-.5l10.500.5-1.500 7.500q-4 1.500-7.500.5L4 18z" fill="#EFE3B6" stroke="#1A1A1A" stroke-width=".6"/></g>
  <g transform="translate(2,488)"><path d="M20 9.500l3.500 1.500L21 21.500l-4 1z" fill="#A8A59A"/><path d="M4.500 3.500q3.500-2.500 7-1l1 2H22l-1 3" fill="#C4DAFA" stroke="#102868" stroke-width="1"/><path d="M3 6q3.500-2.500 7-1l1 2H21.500l-1 3" fill="#C4DAFA" stroke="#102868" stroke-width="1"/><path d="M1 8.500q3.500-2.500 7-1l1.500 2H22L19.500 21q-4 1.500-8 .5L2.500 18.500z" fill="#8CB2F2" stroke="#102868" stroke-width="1.100"/><path d="M3.500 12.500q3-1.500 6-.5l10.500.5-1.500 7.500q-4 1.500-7.500.5L4 18z" fill="#5C8CE4" stroke="#102868" stroke-width=".6"/><path d="M2 11h8.500M2 21h8.500" stroke="#000" stroke-width="1.700"/><rect x="3.200" y="12" width="6" height="8.200" fill="#F0F0F0"/><path d="M4 12v8.500M6.200 12v8.500M8.400 12v8.500" stroke="#444" stroke-width="1"/><circle cx="16" cy="17.500" r="4.600" fill="#2C6CE4" stroke="#103890" stroke-width=".9"/><circle cx="14.800" cy="16" r="1.400" fill="#7CA8F4"/></g>
  <g transform="translate(2,519)"><path d="M20 9.500l3.500 1.500L21 21.500l-4 1z" fill="#A8A59A"/><path d="M4.500 3.500q3.500-2.500 7-1l1 2H22l-1 3" fill="#fff" stroke="#1A1A1A" stroke-width="1"/><path d="M3 6q3.500-2.500 7-1l1 2H21.500l-1 3" fill="#fff" stroke="#1A1A1A" stroke-width="1"/><path d="M1 8.500q3.500-2.500 7-1l1.500 2H22L19.500 21q-4 1.500-8 .5L2.500 18.500z" fill="#FBF7EA" stroke="#1A1A1A" stroke-width="1.100"/><path d="M3.500 12.500q3-1.500 6-.5l10.500.5-1.500 7.500q-4 1.500-7.500.5L4 18z" fill="#EFE3B6" stroke="#1A1A1A" stroke-width=".6"/><circle cx="6" cy="18.500" r="5" fill="#3C847C" stroke="#0A2A28" stroke-width="1"/><circle cx="4.600" cy="16.800" r="1.600" fill="#94CCC4"/></g>
  </svg>
</div>

<!-- ======= ACTION BAR ======= -->
<div id="abar" class="abs">
  <svg style="left:7px;top:4.600px" width="21" height="21" viewBox="0 0 21 21"><circle cx="10.500" cy="10.500" r="9.300" fill="#F4F5F7" stroke="#747474" stroke-width="1.150"/><path d="M5.300 5h9.800l.9 .9v10.300H5.300z" fill="#9A9A9A" stroke="#808080" stroke-width=".9"/><rect x="7.200" y="5.600" width="6.300" height="5" fill="#E8EAEC"/><rect x="7" y="12.300" width="7" height="3.800" fill="#B8B8B8"/><rect x="11" y="12.800" width="2" height="2.800" fill="#EEE"/><rect x="13.800" y="6.200" width="1" height="2" fill="#E0E0E0"/></svg>
  <span class="lbl" style="left:29.500px;top:12.200px;letter-spacing:-.1px">Сохранить</span>
  <svg style="left:104.500px;top:4.600px" width="21" height="21" viewBox="0 0 21 21"><circle cx="10.500" cy="10.500" r="9.500" fill="#F4F5F7" stroke="#747474" stroke-width="1.150"/><path d="M6 6l9 9M15 6l-9 9" stroke="#6E6E6E" stroke-width="2.700" fill="none"/></svg>
  <span class="lbl" style="left:127.500px;top:12.200px;letter-spacing:.15px">Отмена</span>
  <svg style="left:853px;top:4.600px" width="21" height="21" viewBox="0 0 21 21"><circle cx="10.500" cy="10.500" r="9.500" fill="#F4F5F7" stroke="#747474" stroke-width="1.150"/><circle cx="9" cy="9" r="4" fill="#E6E8EA" stroke="#8A8A8A" stroke-width="1.300"/><path d="M12 12l4.500 4.500" stroke="#8A8A8A" stroke-width="2.300"/></svg>
  <span class="lbl" style="left:876.500px;top:12.200px;letter-spacing:.15px">Поиск в СУБД</span>
  <svg style="left:969.500px;top:4.600px" width="21" height="21" viewBox="0 0 21 21"><circle cx="10.500" cy="10.500" r="9.500" fill="#F4F5F7" stroke="#747474" stroke-width="1.150"/><text x="10.500" y="15.800" text-anchor="middle" font-family="DejaVu Sans, Liberation Sans, sans-serif" font-weight="bold" font-size="15" fill="#7A7A7A">?</text></svg>
</div>

<!-- ======= DOCUMENT ======= -->
<div class="abs" style="left:29px;top:175px;width:1px;height:540px;background:#8A877A"></div>
<div id="doc" class="abs"></div>
<div id="panel" class="abs"><div id="phead" class="abs"><span class="t" style="left:10.5px;top:9.5px;font-family:'DejaVu Sans','Liberation Sans',sans-serif;font-weight:bold;font-size:12.5px;color:#fff">Документ</span></div>
  <span class="lbl" style="right:820.3px;top:36.600px">Наименование</span>
  <span class="lbl" style="right:820.3px;top:58.100px">Дата</span>
  <span class="lbl" style="right:820.3px;top:79.100px">Сумма</span>
  <div class="fld" style="left:138px;top:33px;width:794px;height:19px"><span class="t" style="left:1.600px;top:3.900px;font-size:12px;letter-spacing:.4px">Договор</span></div>
  <div class="fld" style="left:138px;top:55px;width:96px;height:19px"><span class="t" style="left:1.600px;top:3.900px;font-size:12px;letter-spacing:.2px">11.10.2005</span>
    <div class="abs" style="left:78px;top:2px;width:15px;height:14px;background:#FAFAF7;border:1px solid #ECEBE4;border-right-color:#8A887C;border-bottom-color:#8A887C"><span class="t" style="left:2.300px;top:3px;font-size:8px;font-weight:bold;font-family:'Liberation Sans',sans-serif">16</span></div></div>
  <div class="fld" style="left:138px;top:76px;width:96px;height:19px"><span class="t" style="left:1.600px;top:3.900px;font-size:12px;letter-spacing:.2px">14789.57</span></div>
  <div class="fld" style="left:10.500px;top:104px;width:923px;height:56px"></div>
</div>

<!-- ======= JAVA DIALOG ======= -->
<div id="dlg" class="abs">
  <div id="dlgt" class="abs">
    <svg style="left:6px;top:9px" width="16" height="16" viewBox="0 0 16 16"><rect width="16" height="16" fill="#fff"/><path d="M5.500 1.200l-1.200 1 1.200 1.200M7.500 .8q-1.200 1.200 0 2.700M9.300 .8q-1.200 1.200 0 2.700M11 .8v2.800" fill="none" stroke="#D8304A" stroke-width="1"/><path d="M4 5.500h8" stroke="#E8A0B0" stroke-width="1.200"/><path d="M2.500 6.500q5.500-2 10 0 2.300.5 2 2-1 2-3.500 2.500l2.500 2.500q-1.500 2-5.500 2t-5.500-2q0-1.500 2-2Q2.500 9.500 2.500 6.500z" fill="#fff" stroke="#0A0A3A" stroke-width="1.200" stroke-linejoin="round"/><path d="M4.500 7q3.500-1.200 7 0M5.500 9.500h4.500M5 12.300h6.500M11.500 7.500l2 1-2.500 2" fill="none" stroke="#0A0A3A" stroke-width="1.100"/></svg>
    <span class="t" style="left:26px;top:11.600px;font-size:13px;font-weight:bold;color:#fff;letter-spacing:-.3px;text-shadow:1px 1px 0 #0A2F9E">serEJa Search:</span>
    <div class="xb" style="left:425px;background:linear-gradient(135deg,#3E78F2,#1E50D8 55%,#2A62E6)"><div class="abs" style="left:4px;top:12px;width:8px;height:3px;background:#fff"></div></div>
    <div class="xb" style="left:448px;background:linear-gradient(135deg,#3E78F2,#1E50D8 55%,#2A62E6)"><div class="abs" style="left:4px;top:4px;width:11px;height:11px;border:1px solid #fff;border-top-width:3px"></div></div>
    <div class="xb" style="left:471px;background:linear-gradient(135deg,#E8876A,#D4502A 55%,#C94A2A)"><svg style="left:3px;top:3px" width="13" height="13"><path d="M2 2 L11 11 M11 2 L2 11" stroke="#fff" stroke-width="2.2" fill="none"/></svg></div>
  </div>
  <div id="dlgc" class="abs"><div class="abs" style="left:0;top:-2px;width:490px;height:272px">
    <span class="jl" style="left:12.5px;top:10.600px;letter-spacing:-.15px">Поиск:</span>
    <div class="abs" style="left:57px;top:6px;width:239px;height:20px;background:#fff;border:1px solid #7A7A7A;box-shadow:1px 1px 0 #fff"><span class="jp" style="left:1px;top:4px">До</span><div class="abs" style="left:16px;top:2px;width:1px;height:15px;background:#000"></div></div>
    <span class="jl" style="left:301.500px;top:10.600px;letter-spacing:-.2px">по</span>
    <div class="combo" style="left:321px;top:6px;width:155px"><span class="jb" style="left:4px;top:4px;letter-spacing:-.2px">Наименование</span><svg style="left:138px;top:6px" width="11" height="6"><path d="M0 0h11l-5.500 5.500z" fill="#000"/></svg></div>
    <div class="abs" id="tbl" style="left:10px;top:37px;width:469px;height:193px;border:1px solid #7A7A7A;box-shadow:1px 1px 0 #fff;background:#CCCCCC;overflow:hidden">
    <div class="abs" style="left:0;top:0;width:317px;height:16px;border-top:1px solid #fff;border-left:1px solid #fff;border-bottom:1px solid #666;border-right:1px solid #666;background:#CCCCCC"><span class="jp" style="left:0;top:2px;width:315px;text-align:center">Наименование</span></div>
    <div class="abs" style="left:317px;top:0;width:150px;height:16px;border-top:1px solid #fff;border-left:1px solid #fff;border-bottom:1px solid #666;border-right:1px solid #666;background:#CCCCCC"><span class="jp" style="left:0;top:2px;width:148px;text-align:center">Сумма</span></div>
    <div class="row" style="top:16px"><span class="jp" style="left:1px;top:2px">Договор</span><div class="abs" style="left:317px;top:0;width:1px;height:15px;background:#999"></div><span class="jp" style="left:320px;top:2px">123456,99</span></div>
    <div class="row" style="top:32px"><span class="jp" style="left:1px;top:2px">Договор</span><div class="abs" style="left:317px;top:0;width:1px;height:15px;background:#999"></div><span class="jp" style="left:320px;top:2px">14789,57</span></div>
    <div class="row" style="top:48px"><span class="jp" style="left:1px;top:2px">Договор</span><div class="abs" style="left:317px;top:0;width:1px;height:15px;background:#999"></div><span class="jp" style="left:320px;top:2px">478,85</span></div>
    <div class="row" style="top:64px"><span class="jp" style="left:1px;top:2px">Договор</span><div class="abs" style="left:317px;top:0;width:1px;height:15px;background:#999"></div><span class="jp" style="left:320px;top:2px">478,58</span></div>
    <div class="row" style="top:80px"><span class="jp" style="left:1px;top:2px">Договор</span><div class="abs" style="left:317px;top:0;width:1px;height:15px;background:#999"></div><span class="jp" style="left:320px;top:2px">147,58</span></div>
    <div class="row" style="top:96px"><span class="jp" style="left:1px;top:2px">Договор</span><div class="abs" style="left:317px;top:0;width:1px;height:15px;background:#999"></div><span class="jp" style="left:320px;top:2px">121344</span></div>
    <div class="row" style="top:112px"><span class="jp" style="left:1px;top:2px">Договор</span><div class="abs" style="left:317px;top:0;width:1px;height:15px;background:#999"></div><span class="jp" style="left:320px;top:2px">121121</span></div>
    <div class="row" style="top:128px"><span class="jp" style="left:1px;top:2px">Договор</span><div class="abs" style="left:317px;top:0;width:1px;height:15px;background:#999"></div><span class="jp" style="left:320px;top:2px">587,58</span></div>
    </div>
    <span class="jl" style="left:10.500px;top:251.600px;letter-spacing:-.2px">Место поиска:</span>
    <div class="combo" style="left:99px;top:247px;width:199px"><span class="jb" style="left:4px;top:4px;letter-spacing:-.2px">Поиск в документах</span><svg style="left:182px;top:6px" width="11" height="6"><path d="M0 0h11l-5.500 5.500z" fill="#000"/></svg></div>
    <div class="abs" style="left:371px;top:251px;width:12px;height:12px;border:1px solid #666;box-shadow:inset 1px 1px 0 #fff,1px 1px 0 #fff;background:#CCCCCC"><svg style="left:1.500px;top:1.500px" width="9" height="9"><path d="M1 4.500l2.300 2.500L7.500 1.200" stroke="#000" stroke-width="2" fill="none"/></svg></div>
    <span class="jb" style="left:387.500px;top:251.600px;letter-spacing:-.22px">Быстрый поиск</span>
  </div></div>
</div>

<!-- ======= STATUS BAR ======= -->
<div id="status" class="abs" style="left:0;top:713px;width:1023px;height:22px">
  <div class="abs" style="left:29px;top:1px;width:994px;height:1px;background:#6F6B5C"></div>
  <div class="sbox" style="left:2px;top:5px;width:33px"></div>
  <div class="sbox" style="left:41px;top:5px;width:754px"></div>
  <div class="sbox" style="left:800px;top:5px;width:46px"></div>
  <div class="sbox" style="left:851px;top:5px;width:118px"></div>
  <div class="sbox" style="left:974px;top:5px;width:47px"></div>
  <svg style="left:785px;top:11px" width="7" height="4" viewBox="0 0 7 4"><path d="M0 4h7l-3.5-4z" fill="#000"/></svg>
  <svg style="left:805px;top:8px" width="21" height="10" viewBox="0 0 21 10"><path d="M1 3.500h11v3H9.500L8.500 8 7 6.500 5.500 8 4 6.500H1z" fill="#E8D860" stroke="#5A5A10" stroke-width="1"/><circle cx="15.500" cy="5" r="4.300" fill="#E8D860" stroke="#5A5A10" stroke-width="1.100"/><circle cx="17" cy="5" r="1.200" fill="#fff" stroke="#5A5A10" stroke-width=".7"/></svg>
  <svg style="left:835px;top:11px" width="7" height="4" viewBox="0 0 7 4"><path d="M0 4h7l-3.5-4z" fill="#000"/></svg>
  <span class="t tah" style="left:856px;top:8.500px;letter-spacing:-.2px">Office</span>
  <svg style="left:958px;top:11px" width="7" height="4" viewBox="0 0 7 4"><path d="M0 4h7l-3.5-4z" fill="#000"/></svg>
  <svg style="left:979px;top:8px" width="19" height="11" viewBox="0 0 19 11"><rect x=".7" y=".7" width="17.600" height="9.600" rx="1" fill="#E4E4F0" stroke="#333" stroke-width="1.200"/><path d="M4 5.500h9M4 7.500h9" stroke="#B8B8D0" stroke-width=".8"/><rect x="14.500" y="1.800" width="2.300" height="2.300" fill="#D02020"/></svg>
  <svg style="left:1009px;top:11px" width="7" height="4" viewBox="0 0 7 4"><path d="M0 4h7l-3.5-4z" fill="#000"/></svg>
</div>

</body>
</html>
